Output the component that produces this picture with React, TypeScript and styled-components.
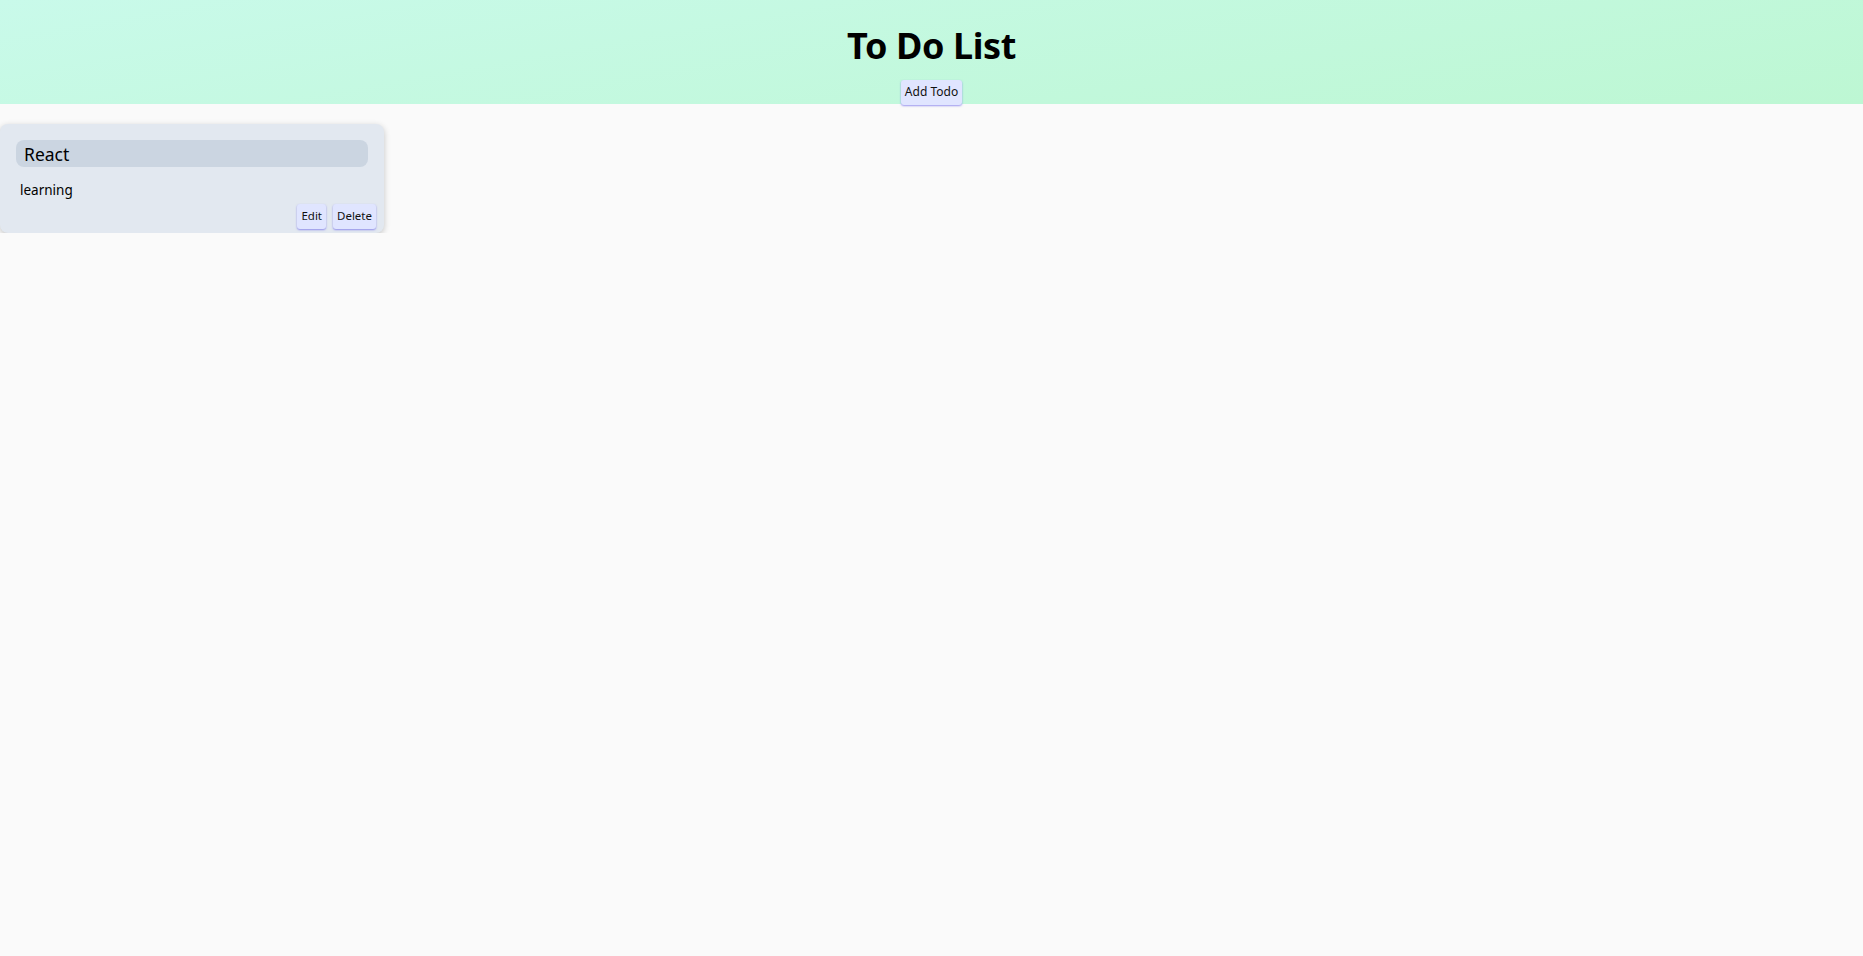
import React from "react";
import styled, { createGlobalStyle } from "styled-components";

const GlobalStyle = createGlobalStyle`
  html, body { margin: 0; padding: 0; }
  body {
    background: #fafafa;
    font-family: "Noto Sans", "Open Sans", Arial, sans-serif;
    color: #000;
  }
`;

const Header = styled.header`
  height: 104px;
  background: linear-gradient(170deg, #c9faea 0%, #bdf7d3 100%);
  display: flex;
  flex-direction: column;
  align-items: center;
  box-sizing: border-box;
  padding-top: 20px;
`;

const Title = styled.h1`
  margin: 0;
  font-size: 36px;
  line-height: 52px;
  font-weight: 700;
  letter-spacing: -0.4px;
`;

const Button = styled.button`
  font-family: inherit;
  font-size: 11.5px;
  line-height: 16px;
  color: #111;
  background: #e0e5ff;
  border: none;
  border-radius: 3px;
  padding: 4px 4px 5px;
  box-shadow: 0 1px 2px rgba(79, 70, 229, 0.55);
  cursor: pointer;
`;

const AddButton = styled(Button)`
  margin-top: 8px;
  font-size: 12px;
`;

const List = styled.main`
  padding-top: 20px;
  display: flex;
  flex-wrap: wrap;
  gap: 16px;
`;

const Card = styled.div`
  width: 384px;
  box-sizing: border-box;
  background: #e2e8f0;
  border-radius: 8px;
  padding: 16px 16px 4px 16px;
  box-shadow: 0 2px 6px rgba(0, 0, 0, 0.22);
`;

const TitleInput = styled.div`
  height: 27px;
  background: #cbd5e1;
  border-radius: 8px;
  padding: 0 8px;
  display: flex;
  align-items: center;
  font-size: 17.5px;
`;

const Desc = styled.p`
  margin: 13px 0 0 4px;
  font-size: 13.5px;
  line-height: 20px;
`;

const Actions = styled.div`
  display: flex;
  justify-content: flex-end;
  gap: 7px;
  margin-right: -8px;
  margin-top: 4px;
`;

export default function App() {
  return (
    <>
      <GlobalStyle />
      <Header>
        <Title>To Do List</Title>
        <AddButton>Add Todo</AddButton>
      </Header>
      <List>
        <Card>
          <TitleInput>React</TitleInput>
          <Desc>learning</Desc>
          <Actions>
            <Button>Edit</Button>
            <Button>Delete</Button>
          </Actions>
        </Card>
      </List>
    </>
  );
}
